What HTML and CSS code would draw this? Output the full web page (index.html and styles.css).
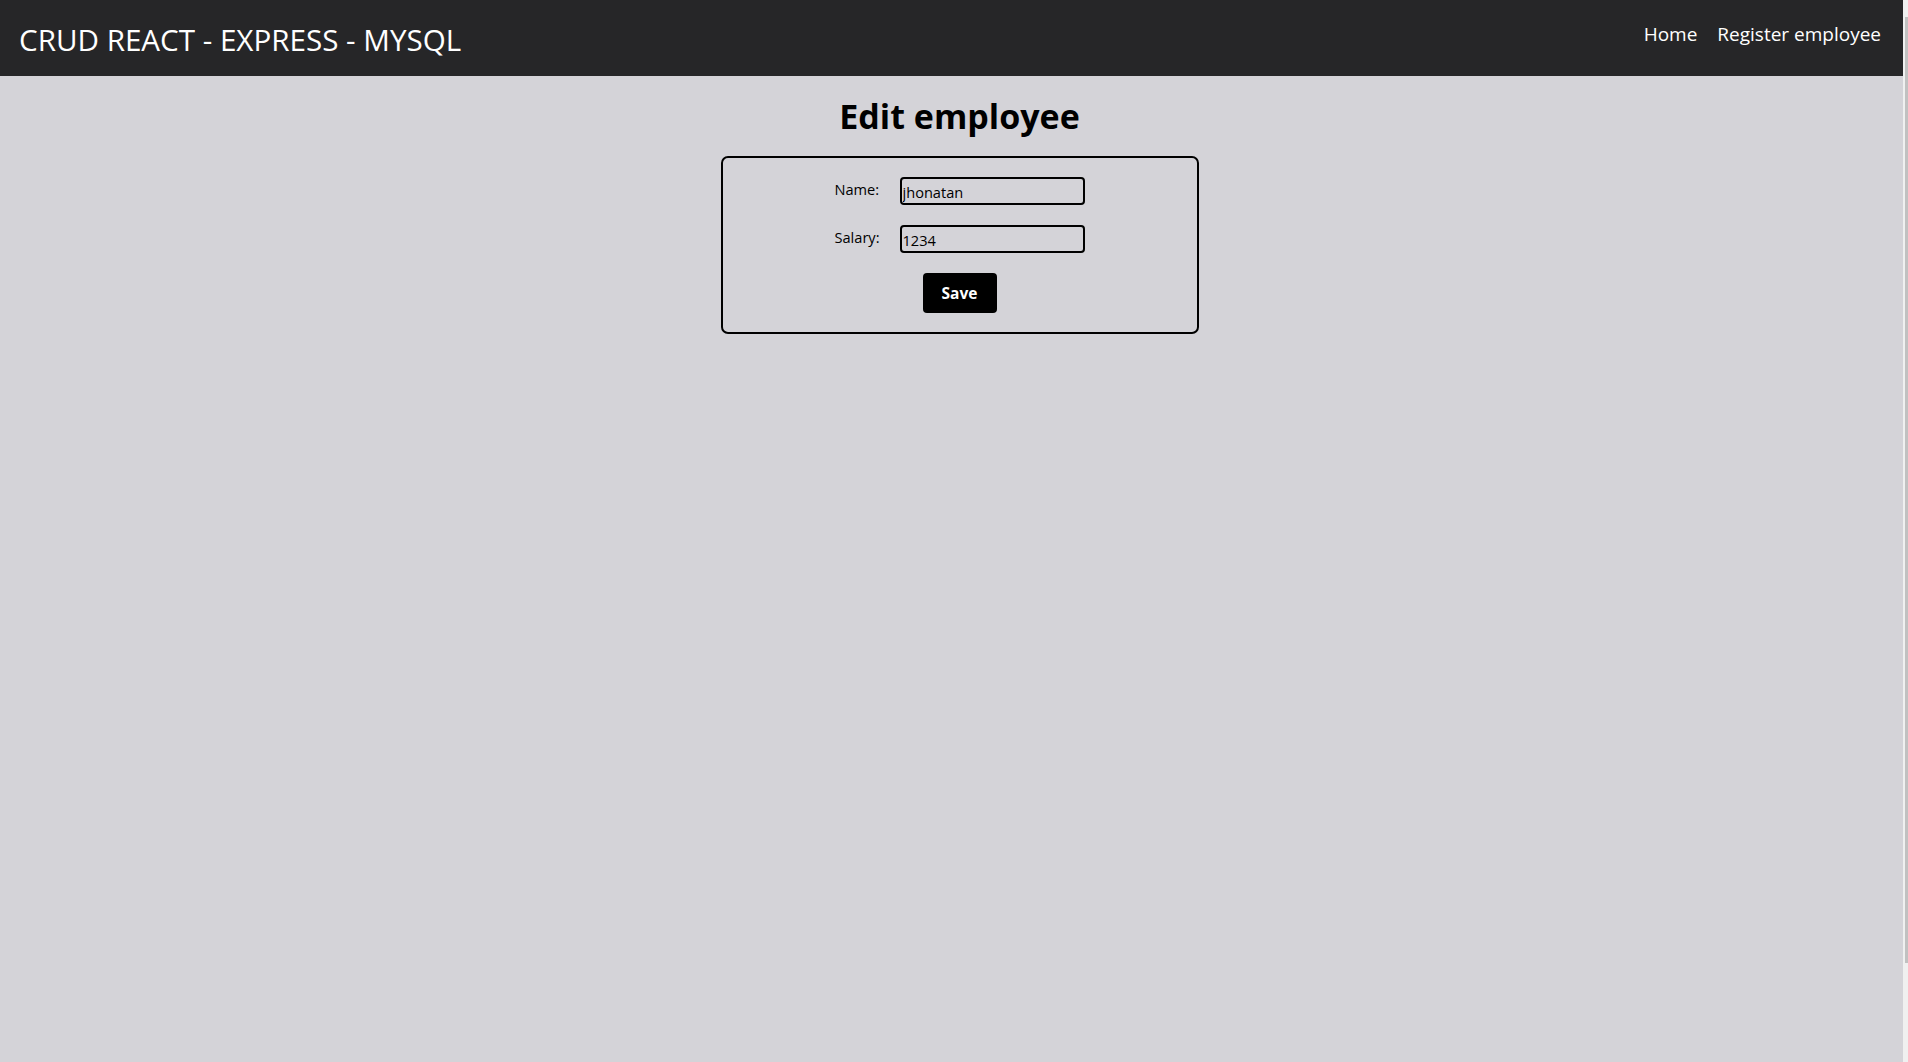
FILE: index.html
```html
<!DOCTYPE html>
<html lang="en">
<head>
<meta charset="utf-8">
<title>CRUD REACT - EXPRESS - MYSQL</title>
<link rel="stylesheet" href="styles.css">
</head>
<body class="page">
  <div class="app">
    <nav class="navbar">
      <a class="brand" href="#">CRUD REACT - EXPRESS - MYSQL</a>
      <div class="links">
        <a class="link" href="#">Home</a>
        <a class="link" href="#">Register employee</a>
      </div>
    </nav>
    <main class="content">
      <h1 class="title">Edit employee</h1>
      <form class="card">
        <div class="fields">
          <label class="label" for="name">Name:</label>
          <input class="input" id="name" type="text" value="jhonatan">
          <label class="label" for="salary">Salary:</label>
          <input class="input" id="salary" type="text" value="1234">
        </div>
        <button class="save" type="button">Save</button>
      </form>
    </main>
  </div>
  <div class="rail"><div class="thumb"></div></div>
</body>
</html>
```
FILE: styles.css
```css
html, body {
  margin: 0;
  padding: 0;
}
.page {
  display: flex;
  height: 1062px;
  overflow: hidden;
  font-family: "Open Sans", "Noto Sans", sans-serif;
  color: #000;
  background: #d4d3d8;
}
.app {
  flex: 1;
  display: flex;
  flex-direction: column;
}
.navbar {
  height: 76px;
  flex: none;
  background: #262628;
  display: flex;
  align-items: center;
  justify-content: space-between;
  padding: 0 22px 0 19px;
}
.brand {
  color: #fff;
  text-decoration: none;
  font-size: 29.6px;
  padding-top: 2px;
}
.links {
  display: flex;
  gap: 20px;
  margin-bottom: 8px;
}
.link {
  color: #fff;
  text-decoration: none;
  font-size: 19px;
}
.content {
  display: flex;
  flex-direction: column;
  align-items: center;
  padding-left: 16px;
}
.title {
  font-size: 34px;
  font-weight: 700;
  margin: 17px 0 17px;
}
.card {
  box-sizing: border-box;
  width: 478px;
  border: 2px solid #000;
  border-radius: 7px;
  padding: 19px;
  display: flex;
  flex-direction: column;
  align-items: center;
  gap: 20px;
}
.fields {
  display: grid;
  grid-template-columns: auto auto;
  column-gap: 20px;
  row-gap: 20px;
  align-items: center;
}
.label {
  font-size: 14.6px;
  margin-top: -4px;
}
.input {
  box-sizing: border-box;
  width: 185px;
  height: 28px;
  border: 2px solid #000;
  border-radius: 4px;
  padding: 2px 1px 0;
  background: transparent;
  font-family: "Open Sans", "Noto Sans", sans-serif;
  font-size: 14.6px;
  color: #000;
  outline: none;
}
.save {
  width: 74px;
  height: 40px;
  border: none;
  border-radius: 4px;
  background: #000;
  color: #fff;
  font-family: "Open Sans", "Noto Sans", sans-serif;
  font-weight: 700;
  font-size: 15.5px;
  cursor: pointer;
}
.rail {
  width: 5px;
  flex: none;
  background: #f0f0f0;
  display: flex;
  flex-direction: column;
}
.thumb {
  flex: 1;
  margin: 17px 0 99px 2px;
  background: #c1c1c1;
}
```
